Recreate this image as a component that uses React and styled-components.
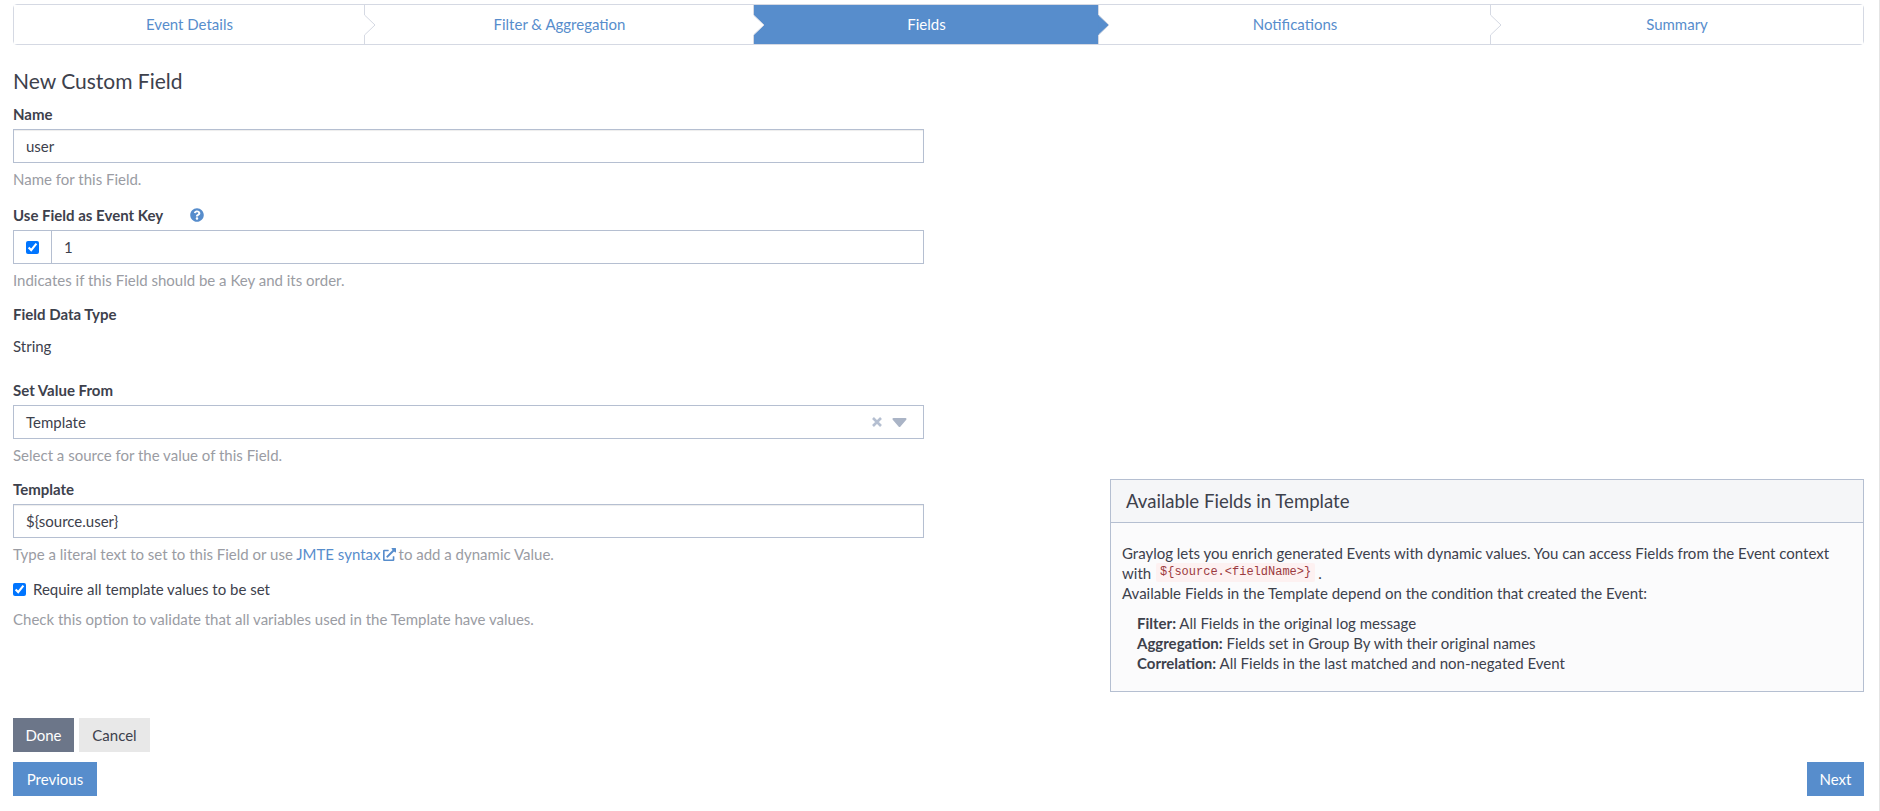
import React from 'react';
import styled, {createGlobalStyle} from 'styled-components';
import {FaExternalLinkAlt, FaQuestionCircle} from 'react-icons/fa';

const BLUE = '#578dcc';
const LINE = '#d5d9e3';
const FIELD_BORDER = '#b5bfd1';
const TEXT = '#3d414c';
const MUTED = '#9a9ca3';

const GlobalStyle = createGlobalStyle`
  html, body {
    margin: 0;
    padding: 0;
    background: #fff;
  }

  body {
    font-family: 'Lato', 'Liberation Sans', sans-serif;
    font-size: 15px;
    line-height: 20px;
    color: ${TEXT};
  }

  * {
    box-sizing: border-box;
  }
`;

const Page = styled.div`
  height: 811px;
  padding: 4px 15px 15px 13px;
  border-right: 1px solid #e4e4e4;
  display: flex;
  flex-direction: column;
`;

const Stepper = styled.div`
  display: flex;
  height: 41px;
  border: 1px solid ${LINE};
  border-radius: 4px;
`;

const Step = styled.div`
  position: relative;
  flex: ${({$grow}) => $grow} 1 0;
  display: flex;
  align-items: center;
  justify-content: center;
  padding-bottom: 1px;
  background: ${({$active}) => ($active ? BLUE : '#fff')};
  color: ${({$active}) => ($active ? '#fff' : BLUE)};
`;

const Chevron = styled.svg`
  position: absolute;
  top: 0;
  left: 100%;
  margin-left: -1px;
  z-index: 1;
  width: 13px;
  height: 39px;
  overflow: visible;
`;

const FormRow = styled.div`
  display: flex;
  justify-content: space-between;
  align-items: flex-end;
  margin-top: 25px;
`;

const FormColumn = styled.div`
  width: 911px;
  padding-bottom: 63px;
`;

const Heading = styled.h2`
  margin: 0 0 12px;
  font-size: 21px;
  line-height: 22px;
  font-weight: 400;
  color: ${TEXT};
`;

const FormGroup = styled.div`
  margin-bottom: ${({$mb}) => $mb ?? 16}px;
`;

const Label = styled.label`
  display: flex;
  align-items: center;
  height: 20px;
  margin-bottom: 5px;
  font-weight: 700;
`;

const HelpIcon = styled(FaQuestionCircle)`
  margin-left: 27px;
  width: 14px;
  height: 14px;
  color: ${BLUE};
`;

const TextInput = styled.input`
  display: block;
  width: 100%;
  height: 34px;
  padding: 6px 12px;
  border: 1px solid ${FIELD_BORDER};
  border-radius: 0;
  outline: none;
  box-shadow: inset 0 1px 1px rgba(0, 0, 0, 0.075);
  font: inherit;
  color: ${TEXT};
`;

const InputGroup = styled.div`
  display: flex;
  height: 34px;
  border: 1px solid ${FIELD_BORDER};
`;

const Addon = styled.span`
  flex: 0 0 38px;
  display: flex;
  align-items: center;
  justify-content: center;
  border-right: 1px solid ${FIELD_BORDER};
`;

const GroupInput = styled.input`
  flex: 1;
  min-width: 0;
  padding: 6px 12px;
  border: 0;
  outline: none;
  font: inherit;
  color: ${TEXT};
`;

const Checkbox = styled.input`
  margin: 0;
  width: 13px;
  height: 13px;
`;

const Help = styled.div`
  margin-top: ${({$mt}) => $mt ?? 6}px;
  color: ${MUTED};
`;

const HelpLink = styled.a`
  color: ${BLUE};
  text-decoration: none;
`;

const LinkIcon = styled(FaExternalLinkAlt)`
  width: 13px;
  height: 13px;
  margin: 0 3px 0 2px;
  vertical-align: -1px;
`;

const StaticValue = styled.div`
  height: 34px;
  padding: 7px 0;
`;

const Select = styled.div`
  display: flex;
  align-items: center;
  justify-content: space-between;
  height: 34px;
  padding: 0 16px 0 12px;
  border: 1px solid ${FIELD_BORDER};
`;

const SelectIcons = styled.span`
  display: flex;
  align-items: center;
  gap: 10px;
`;

const CheckRow = styled.label`
  display: flex;
  align-items: center;
  gap: 7px;
  height: 20px;
`;

const Panel = styled.aside`
  width: 754px;
  border: 1px solid ${FIELD_BORDER};
  background: #fbfbfc;
`;

const PanelHeader = styled.div`
  height: 43px;
  padding: 0 15px;
  display: flex;
  align-items: center;
  background: #f5f6f8;
  border-bottom: 1px solid ${FIELD_BORDER};
  font-size: 18.6px;
`;

const PanelBody = styled.div`
  padding: 20px 11px 18px;
`;

const Para = styled.p`
  margin: 0 0 10px;
`;

const Chip = styled.code`
  display: inline-block;
  vertical-align: top;
  height: 19px;
  margin: 0 3px 0 1px;
  padding: 0 4px;
  border-radius: 2px;
  background: #fdf1f1;
  color: #9c3a40;
  font-family: 'Liberation Mono', monospace;
  font-size: 12px;
  line-height: 19px;
`;

const ConditionList = styled.div`
  padding-left: 15px;
`;

const Actions = styled.div`
  display: flex;
  gap: 5px;
  margin-top: 26px;
`;

const NavRow = styled.div`
  display: flex;
  justify-content: space-between;
  margin-top: 10px;
`;

const Button = styled.button`
  width: ${({$w}) => $w}px;
  height: 34px;
  padding: 0;
  border: 1px solid ${({$bg}) => $bg};
  border-radius: 0;
  background: ${({$bg}) => $bg};
  color: ${({$fg}) => $fg ?? '#fff'};
  font: inherit;
`;

const steps = [
  {title: 'Event Details', grow: 351},
  {title: 'Filter & Aggregation', grow: 389},
  {title: 'Fields', grow: 345, active: true},
  {title: 'Notifications', grow: 392},
  {title: 'Summary', grow: 372},
];

const ClearIcon = () => (
  <svg width="10" height="10" viewBox="0 0 10 10">
    <path d="M1 1 L9 9 M9 1 L1 9" stroke="#b5bfd1" strokeWidth="2.6" />
  </svg>
);

const CaretIcon = () => (
  <svg width="15" height="9" viewBox="0 0 15 9">
    <path d="M1.5 1 H13.5 L7.5 8 Z" fill="#aab4c6" stroke="#aab4c6" strokeWidth="2" strokeLinejoin="round" />
  </svg>
);

const App = () => {
  return (
    <Page>
      <GlobalStyle />
      <Stepper>
        {steps.map((step, i) => (
          <Step key={step.title} $grow={step.grow} $active={step.active}>
            {step.title}
            {i < steps.length - 1 && (
              <Chevron viewBox="0 0 13 39">
                <path
                  d="M0.5 0 V10 L11 20 L0.5 30 V39"
                  fill={step.active ? BLUE : '#fff'}
                  stroke={LINE}
                  strokeWidth="1"
                />
              </Chevron>
            )}
          </Step>
        ))}
      </Stepper>

      <FormRow>
        <FormColumn>
          <Heading>New Custom Field</Heading>

          <FormGroup>
            <Label>Name</Label>
            <TextInput readOnly value="user" />
            <Help>Name for this Field.</Help>
          </FormGroup>

          <FormGroup $mb={14}>
            <Label>
              Use Field as Event Key
              <HelpIcon />
            </Label>
            <InputGroup>
              <Addon>
                <Checkbox type="checkbox" readOnly checked />
              </Addon>
              <GroupInput readOnly value="1" />
            </InputGroup>
            <Help>Indicates if this Field should be a Key and its order.</Help>
          </FormGroup>

          <FormGroup $mb={17}>
            <Label>Field Data Type</Label>
            <StaticValue>String</StaticValue>
          </FormGroup>

          <FormGroup $mb={14}>
            <Label>Set Value From</Label>
            <Select>
              Template
              <SelectIcons>
                <ClearIcon />
                <CaretIcon />
              </SelectIcons>
            </Select>
            <Help>Select a source for the value of this Field.</Help>
          </FormGroup>

          <FormGroup $mb={15}>
            <Label>Template</Label>
            <TextInput readOnly value="${source.user}" />
            <Help>
              Type a literal text to set to this Field or use{' '}
              <HelpLink href="#">
                JMTE syntax
                <LinkIcon />
              </HelpLink>
              to add a dynamic Value.
            </Help>
          </FormGroup>

          <CheckRow>
            <Checkbox type="checkbox" readOnly checked />
            Require all template values to be set
          </CheckRow>
          <Help $mt={10}>Check this option to validate that all variables used in the Template have values.</Help>
        </FormColumn>

        <Panel>
          <PanelHeader>Available Fields in Template</PanelHeader>
          <PanelBody>
            <Para>
              Graylog lets you enrich generated Events with dynamic values. You can access Fields from the Event
              context with <Chip>{'${source.<fieldName>}'}</Chip>.
              <br />
              Available Fields in the Template depend on the condition that created the Event:
            </Para>
            <ConditionList>
              <div>
                <b>Filter:</b> All Fields in the original log message
              </div>
              <div>
                <b>Aggregation:</b> Fields set in Group By with their original names
              </div>
              <div>
                <b>Correlation:</b> All Fields in the last matched and non-negated Event
              </div>
            </ConditionList>
          </PanelBody>
        </Panel>
      </FormRow>

      <Actions>
        <Button $bg="#6c7689" $w={61}>
          Done
        </Button>
        <Button $bg="#e8e8e8" $fg={TEXT} $w={71}>
          Cancel
        </Button>
      </Actions>
      <NavRow>
        <Button $bg={BLUE} $w={84}>
          Previous
        </Button>
        <Button $bg={BLUE} $w={57}>
          Next
        </Button>
      </NavRow>
    </Page>
  );
};

export default App;
